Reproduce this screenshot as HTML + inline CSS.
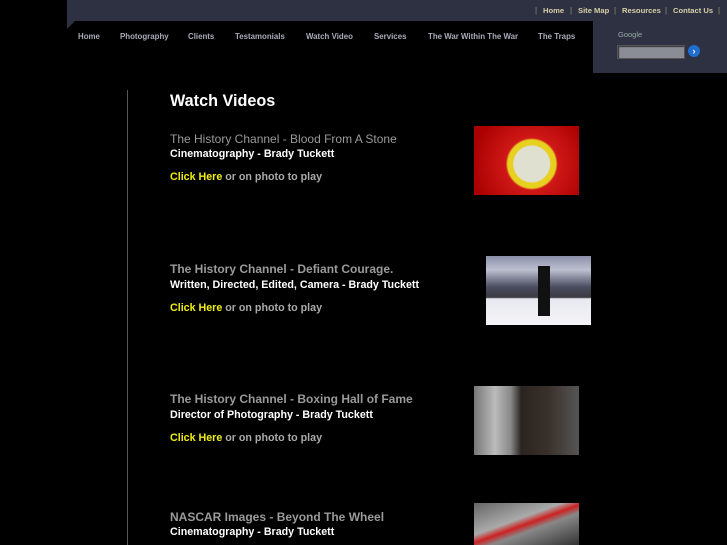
<!DOCTYPE html>
<html><head><meta charset="utf-8"><style>
body{margin:0;width:727px;height:545px;background:#000;position:relative;overflow:hidden;font-family:"Liberation Sans",sans-serif}
.a{position:absolute;white-space:nowrap}
.top{left:67px;top:0;width:660px;height:21px;background:#2d3141}
.tri{left:67px;top:21px;width:0;height:0;border-top:8px solid #2d3141;border-right:8px solid transparent}
.tl{top:6px;font-size:7.6px;font-weight:bold;color:#d8cfa8}
.sep{top:6px;font-size:8px;color:#9a8f70}
.nav{top:32px;font-size:7.9px;font-weight:bold;color:#a9acb8}
.box{left:593px;top:21px;width:134px;height:52px;background:#2d3141}
.t{font-size:12px;color:#9a9a9a}
.w{font-size:10.7px;font-weight:bold;color:#fff}
.c{font-size:10.7px;font-weight:bold;color:#aaa}
.c b{color:#f0ee10}
</style></head><body>
<div class="a top"></div><div class="a tri"></div>
<span class="a sep" style="left:535px">|</span><span class="a tl" style="left:543px">Home</span>
<span class="a sep" style="left:570px">|</span><span class="a tl" style="left:578px">Site Map</span>
<span class="a sep" style="left:614px">|</span><span class="a tl" style="left:622px">Resources</span>
<span class="a sep" style="left:665px">|</span><span class="a tl" style="left:673px">Contact Us</span>
<span class="a sep" style="left:718px">|</span>
<span class="a nav" style="left:78px">Home</span>
<span class="a nav" style="left:120px">Photography</span>
<span class="a nav" style="left:188px">Clients</span>
<span class="a nav" style="left:235px">Testamonials</span>
<span class="a nav" style="left:306px">Watch Video</span>
<span class="a nav" style="left:374px">Services</span>
<span class="a nav" style="left:428px">The War Within The War</span>
<span class="a nav" style="left:538px">The Traps</span>
<div class="a box"></div>
<span class="a" style="left:618px;top:30px;font-size:7.5px;color:#9aa">Google</span>
<div class="a" style="left:617px;top:45px;width:66px;height:12px;background:#8a8d96;border:1px solid #555;box-shadow:inset 1px 1px 1px #333"></div>
<div class="a" style="left:688px;top:45px;width:12px;height:12px;border-radius:50%;background:#1f6fd0;color:#fff;font-size:9px;line-height:12px;text-align:center;font-weight:bold">›</div>
<div class="a" style="left:127px;top:90px;width:1px;height:455px;background:#555"></div>
<span class="a" style="left:170px;top:92px;font-size:16.2px;font-weight:bold;color:#fff">Watch Videos</span>

<span class="a t" style="left:170px;top:132px">The History Channel - Blood From A Stone</span>
<span class="a w" style="left:170px;top:148px">Cinematography - Brady Tuckett</span>
<span class="a c" style="left:170px;top:171px"><b>Click Here</b> or on photo to play</span>
<div class="a" style="left:474px;top:126px;width:105px;height:69px;background:radial-gradient(circle at 55% 55%,#e0e0d0 0 18px,#e8d020 19px 24px,#d01818 26px,#a00 60px)"></div>

<span class="a t" style="left:170px;top:262px;font-weight:bold">The History Channel - Defiant Courage.</span>
<span class="a w" style="left:170px;top:279px">Written, Directed, Edited, Camera - Brady Tuckett</span>
<span class="a c" style="left:170px;top:302px"><b>Click Here</b> or on photo to play</span>
<div class="a" style="left:486px;top:256px;width:105px;height:69px;background:linear-gradient(#8a90a8 0,#bcc0d0 20%,#4a4c60 45%,#3a3a40 60%,#e8e8f0 62%,#f4f4f8 100%)"></div>
<div class="a" style="left:538px;top:266px;width:12px;height:50px;background:#111"></div>

<span class="a t" style="left:170px;top:392px;font-weight:bold">The History Channel - Boxing Hall of Fame</span>
<span class="a w" style="left:170px;top:409px">Director of Photography - Brady Tuckett</span>
<span class="a c" style="left:170px;top:432px"><b>Click Here</b> or on photo to play</span>
<div class="a" style="left:474px;top:386px;width:105px;height:69px;background:linear-gradient(90deg,#777 0,#bbb 20%,#888 35%,#2a2420 45%,#3a302a 70%,#555 100%)"></div>

<span class="a t" style="left:170px;top:510px;font-weight:bold">NASCAR Images - Beyond The Wheel</span>
<span class="a w" style="left:170px;top:526px">Cinematography - Brady Tuckett</span>
<div class="a" style="left:474px;top:503px;width:105px;height:42px;background:linear-gradient(160deg,#666,#aaa 40%,#c22 50%,#888 60%,#333)"></div>
</body></html>
